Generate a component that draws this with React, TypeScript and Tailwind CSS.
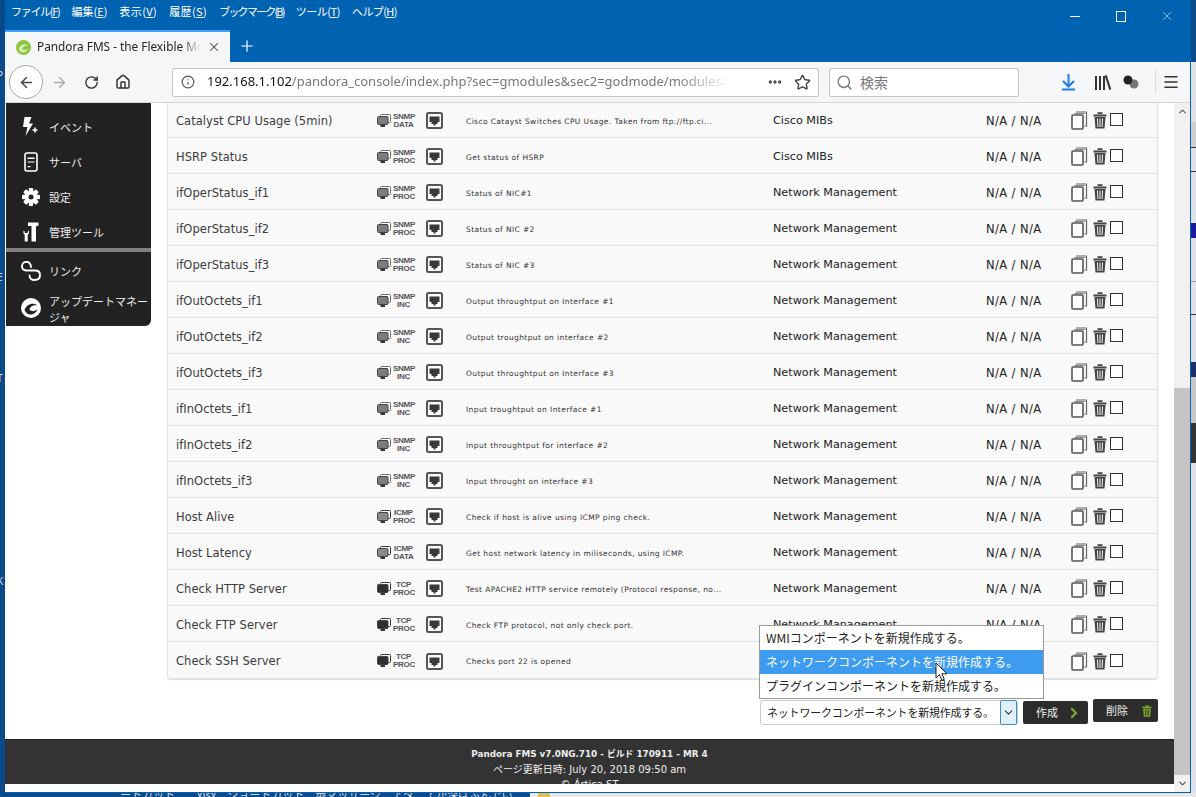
import { ArrowLeft, ArrowRight, ChevronDown, ChevronRight, ChevronUp, Home, Info, Menu, MoreHorizontal, Plus, RotateCw, Search, Star, X } from "lucide-react"

const jp = "font-['Noto_Sans_CJK_JP','Noto_Sans',sans-serif]"
const ui = "font-['DejaVu_Sans','Noto_Sans_CJK_JP',sans-serif]"

type Row = { name: string; a: string; b: string; kind: "snmp" | "icmp" | "tcp"; desc: string; group: string }

const rows: Row[] = [
  { name: "Catalyst CPU Usage (5min)", a: "SNMP", b: "DATA", kind: "snmp", desc: "Cisco Catayst Switches CPU Usage. Taken from ftp://ftp.ci...", group: "Cisco MIBs" },
  { name: "HSRP Status", a: "SNMP", b: "PROC", kind: "snmp", desc: "Get status of HSRP", group: "Cisco MIBs" },
  { name: "ifOperStatus_if1", a: "SNMP", b: "PROC", kind: "snmp", desc: "Status of NIC#1", group: "Network Management" },
  { name: "ifOperStatus_if2", a: "SNMP", b: "PROC", kind: "snmp", desc: "Status of NIC #2", group: "Network Management" },
  { name: "ifOperStatus_if3", a: "SNMP", b: "PROC", kind: "snmp", desc: "Status of NIC #3", group: "Network Management" },
  { name: "ifOutOctets_if1", a: "SNMP", b: "INC", kind: "snmp", desc: "Output throughtput on Interface #1", group: "Network Management" },
  { name: "ifOutOctets_if2", a: "SNMP", b: "INC", kind: "snmp", desc: "Output troughtput on interface #2", group: "Network Management" },
  { name: "ifOutOctets_if3", a: "SNMP", b: "INC", kind: "snmp", desc: "Output throughtput on Interface #3", group: "Network Management" },
  { name: "ifInOctets_if1", a: "SNMP", b: "INC", kind: "snmp", desc: "Input troughtput on Interface #1", group: "Network Management" },
  { name: "ifInOctets_if2", a: "SNMP", b: "INC", kind: "snmp", desc: "Input throughtput for interface #2", group: "Network Management" },
  { name: "ifInOctets_if3", a: "SNMP", b: "INC", kind: "snmp", desc: "Input throught on interface #3", group: "Network Management" },
  { name: "Host Alive", a: "ICMP", b: "PROC", kind: "icmp", desc: "Check if host is alive using ICMP ping check.", group: "Network Management" },
  { name: "Host Latency", a: "ICMP", b: "DATA", kind: "icmp", desc: "Get host network latency in miliseconds, using ICMP.", group: "Network Management" },
  { name: "Check HTTP Server", a: "TCP", b: "PROC", kind: "tcp", desc: "Test APACHE2 HTTP service remotely (Protocol response, no...", group: "Network Management" },
  { name: "Check FTP Server", a: "TCP", b: "PROC", kind: "tcp", desc: "Check FTP protocol, not only check port.", group: "Network Management" },
  { name: "Check SSH Server", a: "TCP", b: "PROC", kind: "tcp", desc: "Checks port 22 is opened", group: "Network Management" },
]

const menus = [
  ["ファイル", "F", "tracking-[-1.300px]"],
  ["編集", "E", "tracking-[0px]"],
  ["表示", "V", "tracking-[0.400px]"],
  ["履歴", "S", "tracking-[0.400px]"],
  ["ブックマーク", "B", "tracking-[-1.800px]"],
  ["ツール", "T", "tracking-[-0.450px]"],
  ["ヘルプ", "H", "tracking-[-0.600px]"],
]

function Monitors({ kind }: { kind: Row["kind"] }) {
  const front = kind === "snmp" ? "#7c7c7c" : kind === "icmp" ? "#8a8a8a" : "#2f2f2f"
  const back = kind === "snmp" ? "#6a6a6a" : "#333"
  return (
    <svg width="14" height="14" viewBox="0 0 14 14" className="shrink-0">
      <rect x="3.5" y="0.5" width="10" height="8" rx="1" fill="#fff" stroke={back} />
      <rect x="0.5" y="2.5" width="10.5" height="8" rx="1" fill={front} stroke="#444" />
      <rect x="3.5" y="11" width="4.5" height="2" fill="#333" />
    </svg>
  )
}

function PortIcon() {
  return (
    <svg width="17" height="17" viewBox="0 0 17 17" className="shrink-0">
      <rect x="1" y="1" width="15" height="15" rx="1.5" fill="#fff" stroke="#555" strokeWidth="2" />
      <path d="M3.500 4.500h10v5.500h-2v2h-2v1.500h-2V12h-2v-2h-2z" fill="#3a3a3a" />
    </svg>
  )
}

function CopyIcon() {
  return (
    <svg width="17" height="19" viewBox="0 0 17 19" className="shrink-0">
      <path d="M5 1h10.500v14h-2" fill="none" stroke="#666" strokeWidth="1.200" />
      <path d="M3.500 2.500H14" fill="none" stroke="#888" strokeWidth="1" />
      <rect x="1" y="4" width="11" height="14" rx="1" fill="#fff" stroke="#555" strokeWidth="1.600" />
    </svg>
  )
}

function TrashIcon({ color = "#444", w = 14, h = 17, gap = "#f9f9f9" }: { color?: string; w?: number; h?: number; gap?: string }) {
  return (
    <svg width={w} height={h} viewBox="0 0 14 17" className="shrink-0">
      <path d="M4.500 1.200h5M0.500 3.500h13" stroke={color} strokeWidth="1.800" fill="none" />
      <path d="M1.500 5h11l-1 11.500h-9z" fill={color} />
      <path d="M4.500 6.500l.4 8.500M7 6.500v8.500M9.500 6.500l-.4 8.500" stroke={gap} strokeWidth="1" fill="none" />
    </svg>
  )
}

function PandoraLogo({ size, ring, core }: { size: number; ring: string; core: string }) {
  return (
    <svg width={size} height={size} viewBox="0 0 20 20" className="shrink-0">
      <circle cx="10" cy="10" r="10" fill={ring} />
      <path d="M3.500 12C5 6.500 12 3.500 16.500 7.500 12.500 6.500 9 8.500 8.500 11.500c2 2.500 6 2 8-.5-1 4-5 6-8 5.500-2-.4-4-2-5-4.500z" fill={core} />
    </svg>
  )
}

function EventIcon() {
  return (
    <svg width="16" height="20" viewBox="0 0 16 20">
      <path d="M1.500 0h7L6 6.500h4L2.500 19 4.500 10H0z" fill="#fff" />
      <path d="M12 10.500v5M9.500 13h5" stroke="#fff" strokeWidth="1.600" />
    </svg>
  )
}

function ServerIcon() {
  return (
    <svg width="14" height="20" viewBox="0 0 14 20">
      <rect x="1" y="1" width="12" height="18" rx="2" fill="none" stroke="#fff" strokeWidth="1.600" />
      <path d="M3.500 5.500h7v1.500h-7zM3.500 9.500h7v1h-7zM3.500 14h3v1.200h-3z" fill="#fff" />
    </svg>
  )
}

function GearIcon() {
  const teeth = [0, 45, 90, 135]
  return (
    <svg width="18" height="18" viewBox="0 0 18 18">
      {teeth.map((t) => (
        <rect key={t} x="6.800" y="0" width="4.400" height="18" rx="1" fill="#fff" transform={`rotate(${t} 9 9)`} />
      ))}
      <circle cx="9" cy="9" r="6.200" fill="#fff" />
      <circle cx="9" cy="9" r="2.500" fill="#222" />
    </svg>
  )
}

function ToolsIcon() {
  return (
    <svg width="16" height="20" viewBox="0 0 16 20">
      <path d="M5 0.500h10.500v3.500c-1.500-.5-2.500 0-2.500 1.500V19.500H8.500V4H5z" fill="#fff" />
      <path d="M0.500 8.500v3l1.200 1.500v6.500h3V13l1.200-1.500v-3L4.700 9.500V11H1.700V9.500z" fill="#fff" />
    </svg>
  )
}

function LinkIcon() {
  return (
    <svg width="20" height="20" viewBox="0 0 20 20">
      <path d="M10 6C10 3 8 .8 5.500 .8 3 .8 1 3 1 5.500 1 8 3 9.500 6 9.500h8c3 0 5 1.500 5 4.500s-2 5-5.500 5c-3 0-5-2-5-4.500" fill="none" stroke="#fff" strokeWidth="1.900" strokeLinecap="round" />
    </svg>
  )
}

function NavItem({ icon, label, h = "h-[35px]" }: { icon: React.ReactNode; label: React.ReactNode; h?: string }) {
  return (
    <div className={`flex items-center ${h}`}>
      <div className="flex w-[43px] justify-center pl-[6px]">{icon}</div>
      <div className="text-[11px] leading-[16px] whitespace-nowrap text-[#eee]">{label}</div>
    </div>
  )
}

function Sidebar() {
  return (
    <aside className={`${jp} w-[145px] shrink-0 self-start rounded-br-[6px] bg-[#222]`}>
      <div className="pt-[6px]">
        <NavItem icon={<EventIcon />} label="イベント" />
        <NavItem icon={<ServerIcon />} label="サーバ" />
        <NavItem icon={<GearIcon />} label="設定" />
        <NavItem icon={<ToolsIcon />} label="管理ツール" />
      </div>
      <div className="mt-[-1px] h-[4px] bg-[#808080]" />
      <NavItem icon={<LinkIcon />} label="リンク" h="h-[38px]" />
      <NavItem
        icon={<PandoraLogo size={20} ring="#fff" core="#222" />}
        label={
          <div className="pt-[2px]">
            アップデートマネー
            <br />
            ジャ
          </div>
        }
        h="h-[36px]"
      />
    </aside>
  )
}

function TableRow({ row }: { row: Row }) {
  return (
    <div className={`${ui} flex h-[36px] items-center border-b border-[#e2e2e2] bg-[#f9f9f9] pt-[2px] last:border-b-0`}>
      <div className="w-[209px] pt-[2px] pl-[8px] text-[11.500px] tracking-[0.050px] text-[#3c3c3c]">{row.name}</div>
      <div className="flex w-[49px] items-center gap-[2px]">
        <Monitors kind={row.kind} />
        <div className="w-[21px] text-center text-[8px] leading-[8px] font-bold tracking-[-0.300px] text-[#555] font-['Liberation_Sans',sans-serif]">
          <div>{row.a}</div>
          <div>{row.b}</div>
        </div>
      </div>
      <div className="w-[40px]">
        <PortIcon />
      </div>
      <div className="w-[307px] pt-[2px] text-[7.500px] tracking-[0.400px] text-[#333]">{row.desc}</div>
      <div className="w-[213px] pt-[2px] text-[11.200px] text-[#222]">{row.group}</div>
      <div className="w-[85px] pt-[2px] text-[11.500px] tracking-[0.400px] text-[#222]">N/A / N/A</div>
      <div className="flex items-center">
        <CopyIcon />
        <div className="ml-[5px]">
          <TrashIcon />
        </div>
        <div className="mb-[2px] ml-[3px] h-[13px] w-[13px] border border-[#333] bg-white" />
      </div>
    </div>
  )
}

function Actions() {
  return (
    <div className={`${jp} mt-[21px] flex items-start justify-end gap-[5px]`}>
      <div className="flex h-[25px] w-[258px] items-center justify-between rounded-[3px] border border-[#ccc] bg-white pl-[6px] text-[11px] tracking-[-0.200px] whitespace-nowrap text-[#222]">
        <span>ネットワークコンポーネントを新規作成する。</span>
        <div className="flex h-[25px] w-[17px] items-center justify-center rounded-[2px] border border-[#3b8ecb] bg-[#e0f0fb]">
          <ChevronDown size={13} color="#333" />
        </div>
      </div>
      <div className="mt-[1px] flex h-[23px] w-[65px] items-center justify-between rounded-[2px] bg-[#2c2c2c] pr-[6px] pl-[13px] text-[11px] text-[#eee]">
        <span>作成</span>
        <ChevronRight size={16} strokeWidth={3.500} color="#7fa52a" />
      </div>
      <div className="mt-[-1px] flex h-[23px] w-[65px] items-center justify-between rounded-[2px] bg-[#2c2c2c] pr-[6px] pl-[13px] text-[11px] text-[#eee]">
        <span>削除</span>
        <TrashIcon color="#7fa52a" w={10} h={12} gap="#2c2c2c" />
      </div>
    </div>
  )
}

function OpenList() {
  const items = ["WMIコンポーネントを新規作成する。", "ネットワークコンポーネントを新規作成する。", "プラグインコンポーネントを新規作成する。"]
  return (
    <div className={`${jp} absolute top-[625px] left-[754px] w-[285px] border border-[#999] bg-white text-[12px] text-[#222]`}>
      {items.map((t, i) => (
        <div key={t} className={`flex h-[24px] items-center pl-[6px] whitespace-nowrap ${i === 1 ? "bg-[#3d9bf0] text-white" : ""}`}>
          {t}
        </div>
      ))}
    </div>
  )
}

function Cursor() {
  return (
    <svg width="13" height="20" viewBox="0 0 13 20" className="absolute top-[662px] left-[930px]">
      <path d="M1 1v15l3.500-3.300 2.300 5.600 2.500-1-2.400-5.500H12z" fill="#fff" stroke="#222" strokeWidth="1" />
    </svg>
  )
}

function Footer() {
  return (
    <footer className={`${ui} mt-[14px] h-[45px] overflow-hidden border-t border-[#222] bg-[#333] pt-[7px] text-center text-[#eee]`}>
      <div className="text-[8.800px] leading-[15px] font-bold">Pandora FMS v7.0NG.710 - ビルド 170911 - MR 4</div>
      <div className="text-[10px] leading-[15px]">ページ更新日時: July 20, 2018 09:50 am</div>
      <div className="text-[10px] leading-[15px]">© Ártica ST</div>
    </footer>
  )
}

function Scrollbar() {
  return (
    <div className="flex w-[16px] shrink-0 flex-col bg-[#f1f1f1]">
      <div className="flex h-[17px] items-center justify-center">
        <ChevronUp size={11} strokeWidth={2.500} color="#555" />
      </div>
      <div className="h-[268px]" />
      <div className="flex-1 bg-[#c4c4c4]" />
      <div className="flex h-[17px] items-center justify-center">
        <ChevronDown size={11} strokeWidth={2.500} color="#555" />
      </div>
    </div>
  )
}

function TitleBar() {
  return (
    <div className={`${jp} flex h-[30px] items-start justify-between bg-[#0063b1] text-white`}>
      <div className="flex gap-[12px] pt-[2px] pl-[6px] text-[11px] leading-[18px]">
        {menus.map(([a, b, track]) => (
          <span key={a} className={track}>
            {a}(<span className="underline">{b}</span>)
          </span>
        ))}
      </div>
      <div className="flex items-center pt-[9px]">
        <div className="flex w-[46px] justify-center">
          <div className="h-px w-[10px] bg-white" />
        </div>
        <div className="flex w-[46px] justify-center">
          <div className="h-[11px] w-[10px] border border-white" />
        </div>
        <div className="flex w-[46px] justify-center">
          <X size={14} strokeWidth={1} color="#fff" />
        </div>
      </div>
    </div>
  )
}

function TabBar() {
  return (
    <div className="flex h-[32px] items-center bg-[#0063b1]">
      <div className="flex h-[32px] w-[225px] items-center border-t-2 border-[#45a1ff] bg-[#f5f6f7] pl-[11px]">
        <PandoraLogo size={15} ring="#8cc63f" core="#d7eab8" />
        <span className="ml-[6px] w-[164px] overflow-hidden text-[11.800px] whitespace-nowrap text-[#222] [mask-image:linear-gradient(to_right,black_88%,transparent)] font-['Noto_Sans',sans-serif]">
          Pandora FMS - the Flexible Monitoring
        </span>
        <X size={14} strokeWidth={1.800} color="#444" className="ml-[6px]" />
      </div>
      <Plus size={18} strokeWidth={1.600} color="#fff" className="ml-[8px]" />
    </div>
  )
}

function NavBar() {
  return (
    <div className="flex h-[41px] items-center border-b border-[#d4d4d4] bg-[#f5f6f7] text-[#333]">
      <div className="ml-[4px] flex h-[34px] w-[34px] shrink-0 items-center justify-center rounded-full border border-[#aaa] bg-white">
        <ArrowLeft size={17} color="#444" />
      </div>
      <ArrowRight size={17} color="#aaa" className="ml-[8px] shrink-0" />
      <RotateCw size={15} strokeWidth={2.200} color="#333" className="ml-[16px] shrink-0" />
      <Home size={16} strokeWidth={2.200} color="#333" className="ml-[16px] shrink-0" />
      <div className="ml-[41px] flex h-[29px] w-[647px] shrink-0 items-center rounded-[2px] border border-[#c4c4c4] bg-white pl-[8px]">
        <Info size={14} color="#555" className="shrink-0" />
        <span className="ml-[12px] w-[523px] shrink-0 overflow-hidden text-[13px] whitespace-nowrap text-[#777] [mask-image:linear-gradient(to_right,black_90%,transparent)] font-['Noto_Sans',sans-serif]">
          <span className="text-[#111]">192.168.1.102</span>/pandora_console/index.php?sec=gmodules&amp;sec2=godmode/modules/
        </span>
        <MoreHorizontal size={16} strokeWidth={3} color="#444" className="ml-[37px] shrink-0" />
        <Star size={17} strokeWidth={2} color="#444" className="ml-[11px] shrink-0" />
      </div>
      <div className={`${jp} ml-[10px] flex h-[29px] w-[190px] shrink-0 items-center rounded-[2px] border border-[#c4c4c4] bg-white pl-[6px] text-[14px] text-[#777]`}>
        <Search size={17} color="#777" />
        <span className="ml-[7px]">検索</span>
      </div>
      <svg width="17" height="18" viewBox="0 0 17 18" className="ml-[41px] shrink-0">
        <path d="M8.500 1v12M3 8l5.500 5.500L14 8M2 16.500h13" fill="none" stroke="#1f7fe0" strokeWidth="2" />
      </svg>
      <div className="ml-[18px] flex shrink-0 items-end gap-[2px]">
        <div className="h-[14px] w-[2px] bg-[#333]" />
        <div className="h-[14px] w-[2px] bg-[#333]" />
        <div className="h-[14px] w-[2px] bg-[#333]" />
        <div className="h-[15px] w-[2px] -rotate-[18deg] bg-[#333]" />
      </div>
      <svg width="18" height="16" viewBox="0 0 18 16" className="ml-[13px] shrink-0">
        <circle cx="12" cy="10" r="4.500" fill="#777" />
        <circle cx="6" cy="6" r="4.500" fill="#222" />
      </svg>
      <div className="ml-[15px] h-[24px] w-px shrink-0 bg-[#ddd]" />
      <Menu size={18} strokeWidth={2} color="#333" className="ml-[6px] shrink-0" />
    </div>
  )
}

export default function App() {
  return (
    <div className="flex h-[797px] w-[1196px] flex-col overflow-hidden bg-[#0b4a8c]">
      <div className="flex h-[793px] shrink-0">
        <div className="relative w-[5px] shrink-0 overflow-hidden bg-[#0a4a8a] text-[10px] text-[#ddd]">
          <span className="absolute top-[68px] -left-[3px]">P</span>
          <span className="absolute top-[270px] -left-[3px]">E</span>
          <span className="absolute top-[371px] -left-[3px]">T</span>
          <span className="absolute top-[574px] -left-[3px]">K</span>
        </div>
        <div className="relative flex w-[1186px] shrink-0 flex-col border-r border-b border-[#0063b1] bg-white">
          <TitleBar />
          <TabBar />
          <NavBar />
          <div className="flex h-[689px] overflow-hidden">
            <div className="min-w-0 flex-1 overflow-hidden">
              <div className="flex pl-px">
                <Sidebar />
                <div className="ml-[16px] flex w-[991px] flex-col">
                  <div className="-mt-px overflow-hidden rounded-b-[3px] border border-t-0 border-[#e2e2e2] shadow-[0_1px_1px_#ddd]">
                    {rows.map((r) => (
                      <TableRow key={r.name} row={r} />
                    ))}
                  </div>
                  <Actions />
                </div>
              </div>
              <Footer />
            </div>
            <Scrollbar />
          </div>
          <OpenList />
          <Cursor />
        </div>
        <div className="flex w-[5px] shrink-0 flex-col bg-[#dfe3e8]">
          <div className="h-[62px] bg-[#0b4a8c]" />
          <div className="h-[60px]" />
          <div className="h-[26px] border-b border-[#333] bg-[#cfcfcf]" />
          <div className="h-[24px] border-b border-[#333]" />
          <div className="h-[51px]" />
          <div className="h-[15px] bg-[#1a1aa0]" />
          <div className="h-[44px] border-b border-[#999]" />
          <div className="h-[33px] border-b border-[#333]" />
          <div className="h-[47px]" />
          <div className="h-[15px] bg-[#1b2f6b]" />
          <div className="h-[46px] bg-[#c8c8c8]" />
          <div className="h-[40px] bg-[#333]" />
        </div>
      </div>
      <div className={`${jp} flex h-[4px] overflow-hidden`}>
        <div className="w-[530px] bg-[#0b4a8c] pl-[120px] text-[11px] leading-[2px] whitespace-nowrap text-[#ddd]">
          ートカット　　xlsx　ショートカット　歩マッサージ　アタ　了が深はふんでい
        </div>
        <div className="w-[8px] bg-[#e8e8e8]" />
        <div className="w-[12px] bg-[#e0c050]" />
        <div className="flex-1 bg-[#e8e8e8]" />
      </div>
    </div>
  )
}
